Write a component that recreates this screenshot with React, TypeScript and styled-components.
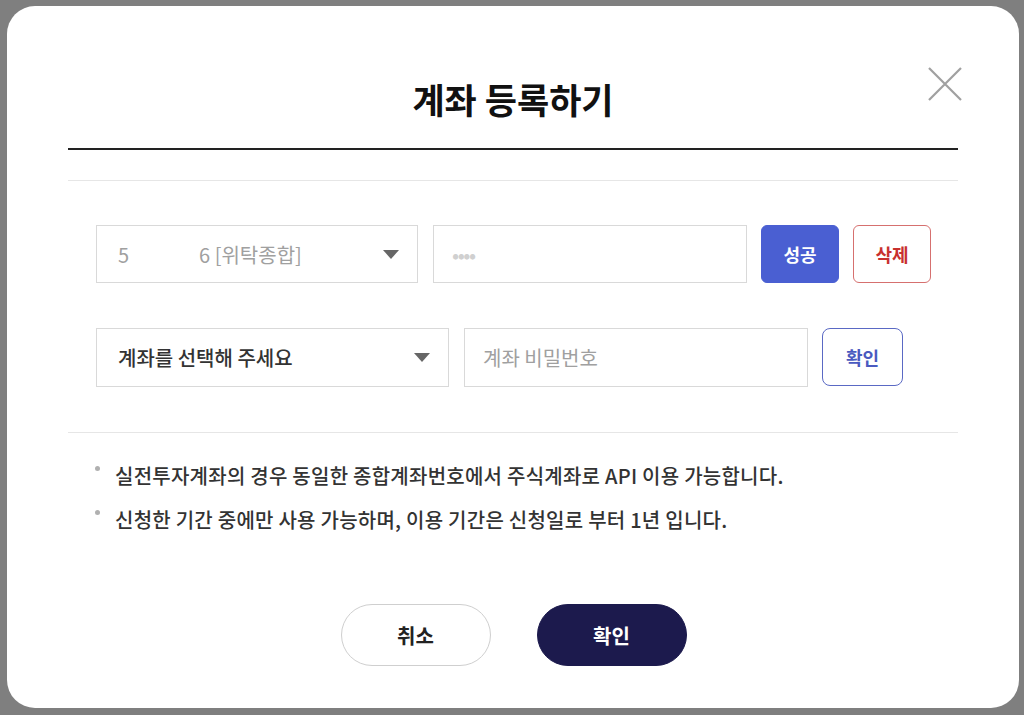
import styled, { createGlobalStyle } from "styled-components";

const GlobalStyle = createGlobalStyle`
  * { box-sizing: border-box; }
  html, body {
    margin: 0;
    padding: 0;
    background: #7f7f7f;
    font-family: "Noto Sans CJK KR", "Noto Sans", sans-serif;
  }
`;

const Page = styled.div`
  width: 1024px;
  height: 715px;
  padding: 6px 0 0 7px;
  background: #7f7f7f;
  overflow: hidden;
`;

const Modal = styled.div`
  position: relative;
  width: 1012px;
  height: 702px;
  background: #fff;
  border-radius: 28px;
  padding: 0 61px;
  display: flex;
  flex-direction: column;
`;

const Header = styled.div`
  height: 144px;
  padding-top: 42px;
  display: flex;
  align-items: center;
  justify-content: center;
  border-bottom: 2px solid #222;
`;

const Title = styled.h2`
  margin: 0;
  font-size: 35px;
  font-weight: 700;
  color: #111;
`;

const CloseButton = styled.button`
  position: absolute;
  top: 61px;
  right: 57px;
  width: 34px;
  height: 34px;
  padding: 0;
  border: 0;
  background: transparent;
  cursor: pointer;
`;

const Divider = styled.div<{ $top: number }>`
  height: 1px;
  background: #e6e6e6;
  margin-top: ${(p) => p.$top}px;
`;

const Form = styled.div`
  display: flex;
  flex-direction: column;
  gap: 45px;
  padding: 44px 0 0 28px;
`;

const Row = styled.div`
  display: flex;
  gap: 14px;
`;

const Select = styled.div<{ $w: number; $h: number; $muted?: boolean }>`
  width: ${(p) => p.$w}px;
  height: ${(p) => p.$h}px;
  margin-right: 1px;
  border: 1px solid #d9d9d9;
  padding: 0 18px 0 21px;
  display: flex;
  align-items: center;
  justify-content: space-between;
  font-size: 20px;
  color: ${(p) => (p.$muted ? "#a0a0a0" : "#333")};
  font-weight: ${(p) => (p.$muted ? 400 : 500)};
`;

const Masked = styled.span`
  display: inline-block;
  width: 70px;
`;

const Arrow = styled.span`
  width: 0;
  height: 0;
  border-left: 8px solid transparent;
  border-right: 8px solid transparent;
  border-top: 9px solid #666;
`;

const Field = styled.input<{ $w: number; $h: number }>`
  width: ${(p) => p.$w}px;
  height: ${(p) => p.$h}px;
  border: 1px solid #d9d9d9;
  padding: 0 18px;
  font-family: inherit;
  font-size: 20px;
  color: #333;
  outline: none;
  &::placeholder { color: #a0a0a0; }
`;

const Secret = styled(Field)`
  font-size: 21px;
  color: #d0d0d0;
  letter-spacing: -1.5px;
`;

const SmallButton = styled.button<{ $variant: "fill" | "danger" | "line"; $w: number; $h: number }>`
  width: ${(p) => p.$w}px;
  height: ${(p) => p.$h}px;
  border-radius: ${(p) => (p.$variant === "line" ? 8 : 6)}px;
  font-family: inherit;
  font-size: 18px;
  font-weight: 700;
  cursor: pointer;
  background: ${(p) => (p.$variant === "fill" ? "#4a5fd2" : "#fff")};
  border: 1px solid
    ${(p) => (p.$variant === "fill" ? "#4a5fd2" : p.$variant === "danger" ? "#d6706f" : "#5a69c4")};
  color: ${(p) => (p.$variant === "fill" ? "#fff" : p.$variant === "danger" ? "#c8302e" : "#4a5ac0")};
`;

const Notes = styled.ul`
  list-style: none;
  margin: 29px 0 0;
  padding: 0 0 0 27px;
  display: flex;
  flex-direction: column;
  gap: 16px;
`;

const Note = styled.li`
  display: flex;
  gap: 15px;
  font-size: 20px;
  line-height: 28px;
  letter-spacing: 0.25px;
  color: #333;
  font-weight: 500;
`;

const Dot = styled.span`
  flex: none;
  width: 5px;
  height: 5px;
  margin-top: 4px;
  border-radius: 50%;
  background: #b0b0b0;
`;

const Footer = styled.div`
  margin-top: 70px;
  display: flex;
  justify-content: center;
  gap: 46px;
  padding-left: 1px;
`;

const PillButton = styled.button<{ $primary?: boolean }>`
  width: 150px;
  height: 62px;
  border-radius: 31px;
  font-family: inherit;
  font-size: 20px;
  font-weight: 700;
  cursor: pointer;
  background: ${(p) => (p.$primary ? "#1c1a4d" : "#fff")};
  color: ${(p) => (p.$primary ? "#fff" : "#222")};
  border: 1px solid ${(p) => (p.$primary ? "#1c1a4d" : "#cfcfcf")};
`;

export default function App() {
  return (
    <Page>
      <GlobalStyle />
      <Modal>
        <Header>
          <Title>계좌 등록하기</Title>
        </Header>
        <CloseButton aria-label="닫기">
          <svg width="34" height="34" viewBox="0 0 34 34">
            <path d="M1 1 L33 33 M33 1 L1 33" stroke="#a0a0a0" strokeWidth="2.2" fill="none" />
          </svg>
        </CloseButton>
        <Divider $top={30} />
        <Form>
          <Row>
            <Select $w={322} $h={58} $muted>
              <span>
                5<Masked />6 [위탁종합]
              </span>
              <Arrow />
            </Select>
            <Secret $w={314} $h={58} type="password" defaultValue="1234" readOnly />
            <SmallButton $variant="fill" $w={78} $h={58}>
              성공
            </SmallButton>
            <SmallButton $variant="danger" $w={78} $h={58}>
              삭제
            </SmallButton>
          </Row>
          <Row>
            <Select $w={353} $h={59}>
              <span>계좌를 선택해 주세요</span>
              <Arrow />
            </Select>
            <Field $w={344} $h={59} placeholder="계좌 비밀번호" />
            <SmallButton $variant="line" $w={81} $h={58}>
              확인
            </SmallButton>
          </Row>
        </Form>
        <Divider $top={45} />
        <Notes>
          <Note>
            <Dot />
            실전투자계좌의 경우 동일한 종합계좌번호에서 주식계좌로 API 이용 가능합니다.
          </Note>
          <Note>
            <Dot />
            신청한 기간 중에만 사용 가능하며, 이용 기간은 신청일로 부터 1년 입니다.
          </Note>
        </Notes>
        <Footer>
          <PillButton>취소</PillButton>
          <PillButton $primary>확인</PillButton>
        </Footer>
      </Modal>
    </Page>
  );
}
